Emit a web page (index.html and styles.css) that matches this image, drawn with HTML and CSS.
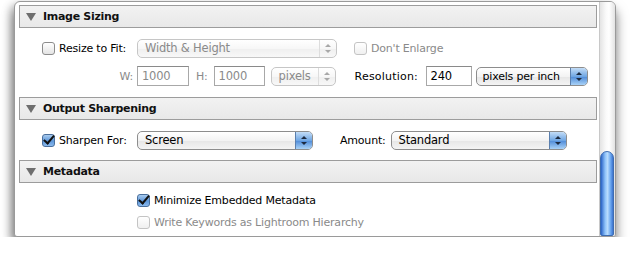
FILE: index.html
```html
<!DOCTYPE html>
<html lang="en">
<head>
    <meta charset="UTF-8">
    <title>Export Settings</title>
    <link rel="stylesheet" href="styles.css">
</head>
<body>
    <div class="window">
        <div class="panel">
            <div class="section-head"><span class="disclosure"></span>Image Sizing</div>
            <div class="row row-first">
                <span class="check"></span>
                <span class="label lbl-fit">Resize to Fit:</span>
                <div class="popup disabled w-wh"><span class="popup-text">Width &amp; Height</span><span class="arrows"></span></div>
                <span class="check check-dim"></span>
                <span class="label dim">Don't Enlarge</span>
            </div>
            <div class="row row-second">
                <span class="label dim lbl-w">W:</span>
                <span class="field dim w-num">1000</span>
                <span class="label dim lbl-h">H:</span>
                <span class="field dim w-num2">1000</span>
                <div class="popup disabled w-px"><span class="popup-text">pixels</span><span class="arrows"></span></div>
                <span class="label lbl-res">Resolution:</span>
                <span class="field w-res">240</span>
                <div class="popup w-ppi"><span class="popup-text">pixels per inch</span><span class="arrows blue"></span></div>
            </div>

            <div class="section-head"><span class="disclosure"></span>Output Sharpening</div>
            <div class="row row-sharpen">
                <span class="check checked"></span>
                <span class="label lbl-fit">Sharpen For:</span>
                <div class="popup w-screen"><span class="popup-text">Screen</span><span class="arrows blue"></span></div>
                <span class="label lbl-amount">Amount:</span>
                <div class="popup w-screen"><span class="popup-text">Standard</span><span class="arrows blue"></span></div>
            </div>

            <div class="section-head"><span class="disclosure"></span>Metadata</div>
            <div class="row row-meta">
                <span class="check checked"></span>
                <span class="label">Minimize Embedded Metadata</span>
            </div>
            <div class="row row-meta2">
                <span class="check check-dim"></span>
                <span class="label dim">Write Keywords as Lightroom Hierarchy</span>
            </div>
        </div>
        <div class="scroll">
            <div class="thumb"></div>
        </div>
    </div>
</body>
</html>
```

FILE: styles.css
```css
body {
    margin: 0;
    background-color: #fff;
    font-family: "DejaVu Sans", sans-serif;
    font-size: 11px;
    letter-spacing: -0.2px;
    color: #000;
    overflow: hidden;
}

.window {
    display: flex;
    width: 600px;
    height: 234px;
    margin: 1px 0 0 14px;
    border: 1px solid #9a9a9a;
    border-radius: 6px 6px 3px 3px;
    background-color: #fff;
    box-shadow: 0 9px 12px rgba(0,0,0,0.5), -4px 3px 8px rgba(0,0,0,0.22);
    overflow: hidden;
}

.panel {
    flex: 1;
    padding: 3px 2px 0 4px;
}

.section-head {
    display: flex;
    align-items: center;
    height: 21px;
    border: 1px solid #9c9c9c;
    background: linear-gradient(#f2f2f2, #e8e8e8);
    font-weight: bold;
    font-size: 11px;
    letter-spacing: -0.3px;
    color: #111;
}

.disclosure {
    width: 0;
    height: 0;
    margin: 1px 7px 0 6px;
    border-left: 5px solid transparent;
    border-right: 5px solid transparent;
    border-top: 8px solid #6e6e6e;
}

.row {
    display: flex;
    align-items: center;
    padding-left: 23px;
}

.row-first { margin-top: 10px; height: 20px; }
.row-second { margin-top: 8px; height: 20px; margin-bottom: 11px; }
.row-sharpen { margin-top: 10px; height: 20px; margin-bottom: 10px; }
.row-meta { margin-top: 10px; height: 14px; padding-left: 118px; }
.row-meta2 { margin-top: 8px; height: 14px; padding-left: 118px; }

.label {
    white-space: nowrap;
}

.dim {
    color: #8a8a8a;
}

.check {
    flex: none;
    box-sizing: border-box;
    width: 13px;
    height: 13px;
    margin-right: 4px;
    border: 1px solid #8c8c8c;
    border-radius: 3px;
    background: linear-gradient(#fff, #e4e4e4);
    position: relative;
}

.check-dim {
    border-color: #c4c4c4;
    background: linear-gradient(#fff, #f0f0f0);
    margin-left: 17px;
}

.row-meta2 .check-dim {
    margin-left: 0;
}

.checked {
    border-color: #4a6f9c;
    background: linear-gradient(#a9cbee, #5d97da 55%, #8bbaee);
}

.checked::after {
    content: "";
    position: absolute;
    left: 3px;
    top: -2px;
    width: 4px;
    height: 9px;
    border-right: 2px solid #111;
    border-bottom: 2px solid #111;
    transform: rotate(40deg);
}

.lbl-fit { width: 78px; }

.lbl-w { width: 91px; text-align: right; padding-right: 4px; }
.lbl-h { margin: 0 6px 0 7px; }
.lbl-res { width: 66px; margin: 0 5px 0 19px; letter-spacing: 0.2px; }
.lbl-amount { margin: 0 5px 0 27px; }

.field {
    box-sizing: border-box;
    height: 20px;
    padding: 2px 0 0 4px;
    border: 1px solid #a8a8a8;
    border-top-color: #8a8a8a;
    background-color: #fff;
    font-size: 11.5px;
}

.w-num { width: 52px; }
.w-num2 { width: 51px; margin-right: 6px; }
.w-res { width: 46px; margin-right: 4px; color: #000; }

.popup {
    flex: none;
    box-sizing: border-box;
    display: flex;
    align-items: center;
    height: 19px;
    border: 1px solid #8d8d8d;
    border-radius: 5px;
    background: linear-gradient(#fff, #f3f3f3 50%, #e6e6e6 51%, #f4f4f4);
    overflow: hidden;
}

.popup.disabled {
    border-color: #c6c6c6;
    color: #8a8a8a;
    background: linear-gradient(#fff, #f7f7f7 50%, #efefef 51%, #f8f8f8);
}

.popup-text {
    flex: 1;
    padding-left: 7px;
    white-space: nowrap;
    font-size: 11.5px;
}

.w-ppi .popup-text {
    font-size: 11px;
    padding-left: 6px;
}

.w-wh { width: 200px; }
.w-px { width: 65px; }
.w-ppi { width: 112px; }
.w-screen { width: 176px; }

.arrows {
    flex: none;
    position: relative;
    width: 16px;
    height: 100%;
    border-left: 1px solid #ddd;
}

.arrows::before,
.arrows::after {
    content: "";
    position: absolute;
    left: 5px;
    border-left: 3px solid transparent;
    border-right: 3px solid transparent;
}

.arrows::before {
    top: 4px;
    border-bottom: 3px solid #a8a8a8;
}

.arrows::after {
    top: 10px;
    border-top: 3px solid #a8a8a8;
}

.arrows.blue {
    border-left: 1px solid #5a7fae;
    background: linear-gradient(#c3ddf7, #6fa6e3 50%, #4d8ad8 51%, #a9d2f7);
}

.arrows.blue::before { border-bottom-color: #1c2a40; }
.arrows.blue::after { border-top-color: #1c2a40; }

.scroll {
    width: 15px;
    border-left: 1px solid #c8c8c8;
    background: linear-gradient(90deg, #e4e4e4, #fafafa 40%, #fff 60%, #e2e2e2);
    display: flex;
    flex-direction: column;
    justify-content: flex-end;
}

.thumb {
    height: 83px;
    margin: 0 1px 0 0;
    border: 1px solid #3e6db1;
    border-radius: 7px 7px 2px 2px;
    background: linear-gradient(90deg, #2a63c6, #8fc3fa 35%, #b9dcfd 55%, #6aa6ef 80%, #3b73cf);
}
```
